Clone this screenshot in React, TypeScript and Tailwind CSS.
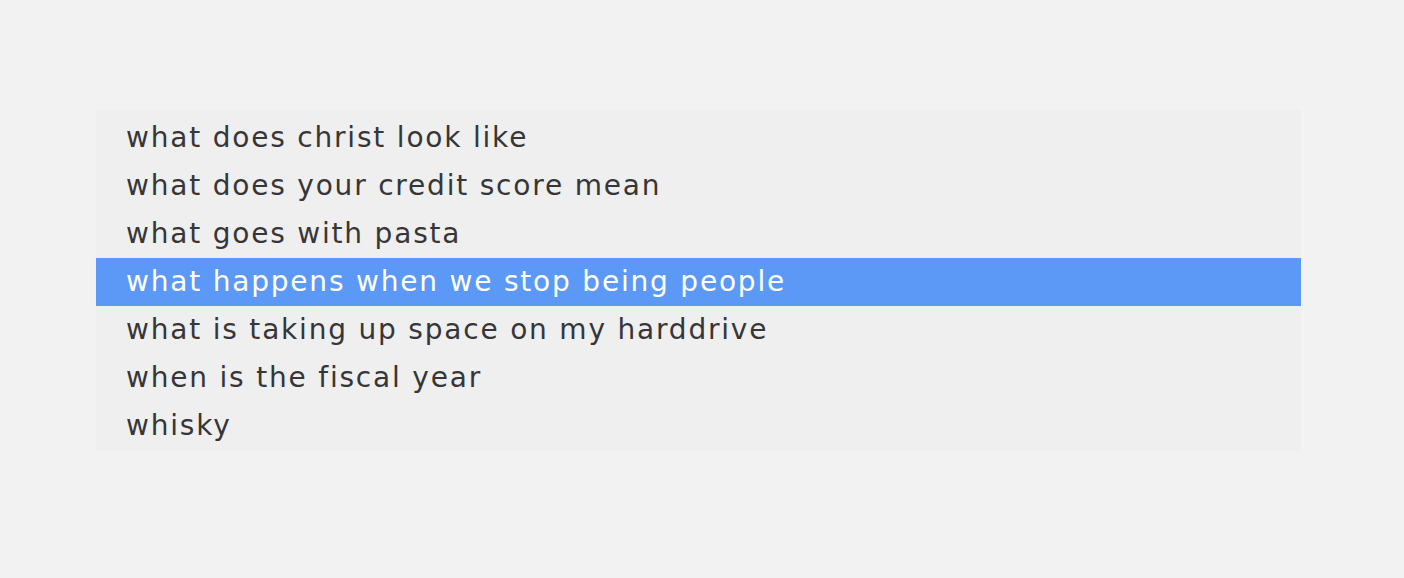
const items = [
  "what does christ look like",
  "what does your credit score mean",
  "what goes with pasta",
  "what happens when we stop being people",
  "what is taking up space on my harddrive",
  "when is the fiscal year",
  "whisky",
];

const selected = 3;

export default function App() {
  return (
    <div className="h-[578px] w-[1404px] bg-[#f2f2f2] pt-[110px] pl-[96px] font-['DejaVu_Sans',sans-serif]">
      <ul className="w-[1205px] bg-[#efefef] pt-[4px] pb-[1px]">
        {items.map((item, i) => (
          <li
            key={item}
            className={
              i === selected
                ? "h-[48px] pl-[30px] flex items-center text-[28px] tracking-[1.8px] bg-[#5c99f6] text-white"
                : "h-[48px] pl-[30px] flex items-center text-[28px] tracking-[1.8px] text-[#363638]"
            }
          >
            {item}
          </li>
        ))}
      </ul>
    </div>
  );
}
